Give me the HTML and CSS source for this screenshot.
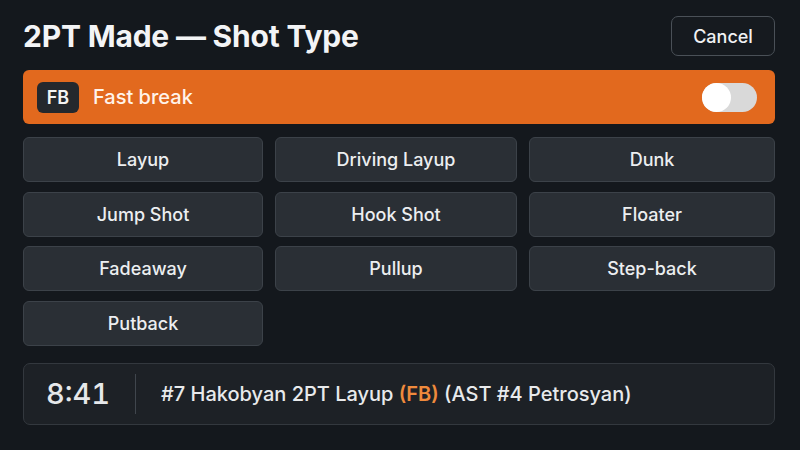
FILE: index.html
```html
<!DOCTYPE html>
<html>
<head>
<meta charset="utf-8">
<link rel="stylesheet" href="styles.css">
</head>
<body>
<div class="screen">
  <header class="header">
    <h1 class="title">2PT Made — Shot Type</h1>
    <button class="cancel">Cancel</button>
  </header>
  <div class="fb-bar">
    <span class="fb-badge">FB</span>
    <span class="fb-label">Fast break</span>
    <span class="toggle"><span class="knob"></span></span>
  </div>
  <div class="grid">
    <button class="shot">Layup</button>
    <button class="shot">Driving Layup</button>
    <button class="shot">Dunk</button>
    <button class="shot">Jump Shot</button>
    <button class="shot">Hook Shot</button>
    <button class="shot">Floater</button>
    <button class="shot">Fadeaway</button>
    <button class="shot">Pullup</button>
    <button class="shot">Step-back</button>
    <button class="shot">Putback</button>
  </div>
  <div class="log">
    <span class="clock">8:41</span>
    <span class="divider"></span>
    <span class="entry">#7 Hakobyan 2PT Layup <span class="hl">(FB)</span> (AST #4 Petrosyan)</span>
  </div>
</div>
</body>
</html>
```
FILE: styles.css
```css
* { box-sizing: border-box; }
html, body {
  margin: 0;
  width: 800px;
  height: 450px;
  background: #14181d;
  overflow: hidden;
  font-family: Inter, "Noto Sans", sans-serif;
  color: #eef0f2;
}
.screen {
  padding: 16px 25px 0 23px;
  display: flex;
  flex-direction: column;
}
.header {
  display: flex;
  justify-content: space-between;
  align-items: center;
  height: 40px;
}
.title {
  margin: 0;
  font-size: 30px;
  font-weight: 700;
  letter-spacing: -0.2px;
  color: #f3f4f6;
}
.cancel {
  width: 104px;
  height: 40px;
  background: #161a1f;
  border: 1px solid #4a5057;
  border-radius: 7px;
  color: #f0f1f3;
  font-family: inherit;
  font-size: 18px;
  font-weight: 500;
}
.fb-bar {
  margin-top: 14px;
  height: 54px;
  background: #e2691e;
  border-radius: 6px;
  display: flex;
  align-items: center;
  padding: 0 18px 0 14px;
}
.fb-badge {
  width: 42px;
  height: 31px;
  background: #24282d;
  border-radius: 6px;
  display: flex;
  align-items: center;
  justify-content: center;
  font-size: 18px;
  font-weight: 600;
  color: #f4f4f4;
}
.fb-label {
  margin-left: 14px;
  font-size: 20px;
  font-weight: 500;
  color: #fff3ea;
  flex: 1;
}
.toggle {
  width: 55px;
  height: 29px;
  border-radius: 15px;
  background: #d9d9d9;
  display: flex;
  align-items: center;
}
.knob {
  width: 29px;
  height: 29px;
  border-radius: 50%;
  background: #ffffff;
}
.grid {
  margin-top: 13px;
  display: grid;
  grid-template-columns: 240px 242px 246px;
  grid-auto-rows: 45px;
  column-gap: 12px;
  row-gap: 9.5px;
}
.shot {
  background: #2a2f35;
  border: 1px solid #3c4249;
  border-radius: 6px;
  color: #eceef0;
  font-family: inherit;
  font-size: 18px;
  font-weight: 500;
}
.log {
  margin-top: 17px;
  height: 62px;
  background: #1d2126;
  border: 1px solid #33383e;
  border-radius: 7px;
  display: flex;
  align-items: center;
  padding-left: 22px;
}
.clock {
  font-size: 29px;
  font-weight: 500;
  color: #e6e8ea;
  font-variant-numeric: tabular-nums;
  width: 89px;
}
.divider {
  width: 1px;
  height: 40px;
  background: #40464d;
}
.entry {
  margin-left: 25px;
  font-size: 20px;
  font-weight: 500;
  color: #e8eaec;
}
.hl {
  color: #ef8a3c;
  font-weight: 600;
}
```
